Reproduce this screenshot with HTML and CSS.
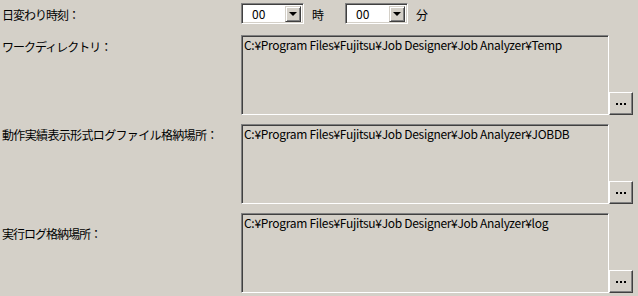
FILE: index.html
```html
<!DOCTYPE html>
<html lang="ja">
<head>
<meta charset="utf-8">
<link rel="stylesheet" href="styles.css">
</head>
<body>
<div class="panel">
  <div class="time-row">
    <div class="label label-time">日変わり時刻：</div>
    <div class="time-fields">
      <div class="combo"><span class="combo-text">00</span><span class="combo-btn"><span class="arrow"></span></span></div>
      <span class="unit unit-hour">時</span>
      <div class="combo"><span class="combo-text">00</span><span class="combo-btn"><span class="arrow"></span></span></div>
      <span class="unit">分</span>
    </div>
  </div>

  <div class="path-row">
    <div class="label label-a">ワークディレクトリ：</div>
    <div class="field">
      <div class="path-box">C:¥Program Files¥Fujitsu¥Job Designer¥Job Analyzer¥Temp</div>
      <div class="browse"><span class="dot"></span><span class="dot"></span><span class="dot"></span></div>
    </div>
  </div>

  <div class="path-row">
    <div class="label label-b">動作実績表示形式ログファイル格納場所：</div>
    <div class="field">
      <div class="path-box">C:¥Program Files¥Fujitsu¥Job Designer¥Job Analyzer¥JOBDB</div>
      <div class="browse"><span class="dot"></span><span class="dot"></span><span class="dot"></span></div>
    </div>
  </div>

  <div class="path-row path-row-last">
    <div class="label label-c">実行ログ格納場所：</div>
    <div class="field">
      <div class="path-box">C:¥Program Files¥Fujitsu¥Job Designer¥Job Analyzer¥log</div>
      <div class="browse"><span class="dot"></span><span class="dot"></span><span class="dot"></span></div>
    </div>
  </div>
</div>
</body>
</html>
```

FILE: styles.css
```css
* { box-sizing: border-box; }
html, body {
  margin: 0;
  padding: 0;
  background: #d4d0c8;
}
body {
  width: 638px;
  height: 296px;
  overflow: hidden;
  font-family: "Noto Sans CJK JP", "Liberation Sans", sans-serif;
  font-size: 12px;
  color: #000;
}
.panel {
  display: flex;
  flex-direction: column;
  padding-top: 3px;
}
.time-row {
  display: flex;
  height: 32px;
}
.label {
  width: 241px;
  flex: none;
  padding-left: 2px;
  line-height: 14px;
  white-space: nowrap;
  letter-spacing: -1px;
}
.label-time { padding-top: 5px; }
.label-a { padding-top: 5px; }
.label-b { padding-top: 4px; letter-spacing: -0.65px; }
.label-c { padding-top: 14px; }
.time-fields {
  display: flex;
  align-items: flex-start;
}
.combo {
  width: 63px;
  height: 21px;
  background: #fff;
  border-top: 1px solid #808080;
  border-left: 1px solid #808080;
  border-right: 1px solid #fff;
  border-bottom: 1px solid #fff;
  box-shadow: inset 1px 1px 0 #404040, inset -1px -1px 0 #d4d0c8;
  display: flex;
  align-items: center;
  justify-content: space-between;
  padding: 2px 2px 2px 10px;
}
.combo-text {
  line-height: 14px;
}
.combo-btn {
  width: 16px;
  height: 16px;
  background: #d4d0c8;
  border-top: 1px solid #d4d0c8;
  border-left: 1px solid #d4d0c8;
  border-right: 1px solid #404040;
  border-bottom: 1px solid #404040;
  box-shadow: inset 1px 1px 0 #fff, inset -1px -1px 0 #808080;
  display: flex;
  align-items: center;
  justify-content: center;
}
.arrow {
  width: 0;
  height: 0;
  border-left: 4px solid transparent;
  border-right: 4px solid transparent;
  border-top: 4px solid #000;
  margin-top: 1px;
}
.unit {
  line-height: 14px;
  padding-top: 5px;
  margin-left: 8px;
}
.unit-hour { margin-right: 21px; }
.path-row {
  display: flex;
  height: 89px;
}
.path-row-last { height: 84px; }
.field {
  display: flex;
  align-items: flex-end;
  height: 80px;
}
.path-box {
  width: 368px;
  height: 80px;
  background: #d4d0c8;
  border-top: 1px solid #808080;
  border-left: 1px solid #808080;
  border-right: 1px solid #fff;
  border-bottom: 1px solid #fff;
  box-shadow: inset 1px 1px 0 #404040, inset -1px -1px 0 #d4d0c8;
  padding: 2px 2px;
  line-height: 14px;
  white-space: nowrap;
  letter-spacing: -0.3px;
}
.browse {
  width: 24px;
  height: 23px;
  background: #d4d0c8;
  border-top: 1px solid #fff;
  border-left: 1px solid #fff;
  border-right: 1px solid #404040;
  border-bottom: 1px solid #404040;
  box-shadow: inset -1px -1px 0 #808080;
  display: flex;
  align-items: center;
  justify-content: center;
  gap: 2px;
  padding-top: 1px;
}
.dot {
  width: 2px;
  height: 2px;
  background: #000;
}
```
